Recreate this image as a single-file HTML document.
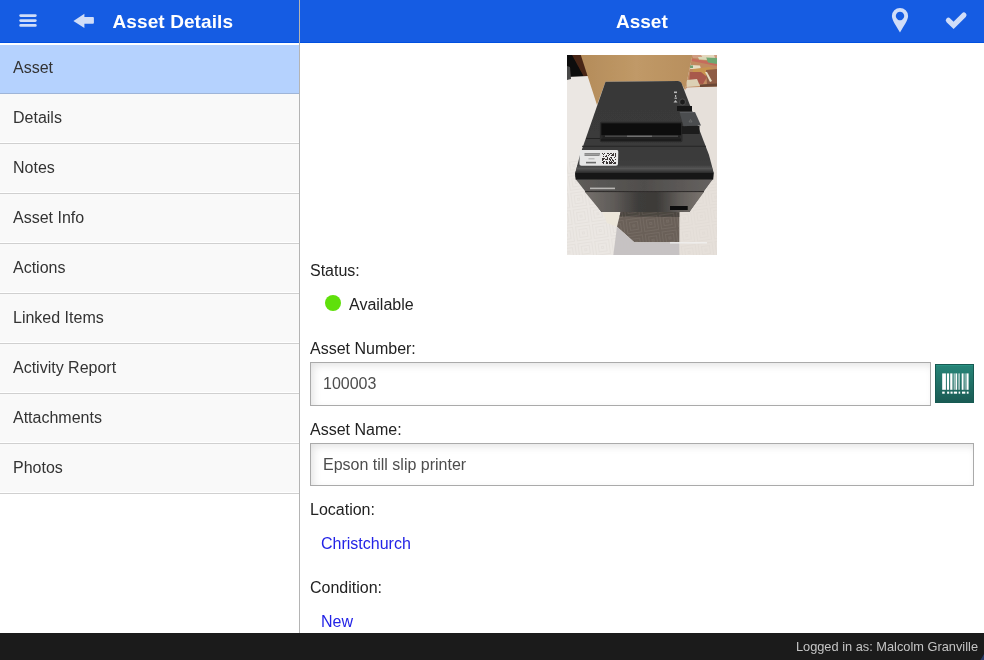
<!DOCTYPE html>
<html><head><meta charset="utf-8">
<style>
*{margin:0;padding:0;box-sizing:border-box}
html,body{width:984px;height:660px;overflow:hidden;background:#fff;font-family:"Liberation Sans",sans-serif;color:#333}
.abs{position:absolute}
#hdr{position:absolute;left:0;top:0;width:984px;height:43px;background:#155ce3;border-bottom:1px solid #0050e0}
.ttl{position:absolute;color:#fff;font-weight:bold;font-size:19px;line-height:22px;white-space:nowrap}
#vsep{position:absolute;left:299px;top:0;width:1px;height:633px;background:#b4b4b4}
#side{position:absolute;left:0;top:43px;width:299px;height:590px;background:#fff}
.it{position:absolute;left:0;width:299px;height:50px;background:#f9f9f9;border-bottom:1px solid #d0d0d0;box-shadow:inset 0 -1px 0 #fff;font-size:16px;line-height:18px;color:#333}
.it span{position:absolute;left:13px;top:15px}
.lbl{position:absolute;left:310px;font-size:16px;line-height:18px;color:#222;white-space:nowrap}
.inp{position:absolute;left:310px;border:1px solid #aaa;background:#fff;box-shadow:inset 3px 3px 8px -1px rgba(0,0,0,0.12)}
.inp span{position:absolute;left:12px;font-size:16px;line-height:18px;color:#4d4d4d;white-space:nowrap}
.lnk{position:absolute;left:321px;font-size:16px;line-height:18px;color:#2323e6;white-space:nowrap}
#ftr{position:absolute;left:0;top:633px;width:984px;height:27px;background:#1b1b1b}
#ftr span{position:absolute;right:6px;top:6px;font-size:12.8px;line-height:15px;color:#c4c4c4;white-space:nowrap}
</style></head><body>
<div id="wrap" style="position:absolute;left:0;top:0;width:984px;height:660px;will-change:transform">
<div id="hdr"></div>
<div id="side">
  <div style="position:absolute;left:0;top:0;width:299px;height:2px;background:#fff"></div>
  <div class="it" style="top:2px;height:49px;background:#b5d2fe;border-bottom-color:#9fb5d8;box-shadow:none"><span style="top:14px">Asset</span></div>
  <div class="it" style="top:51px"><span>Details</span></div>
  <div class="it" style="top:101px"><span>Notes</span></div>
  <div class="it" style="top:151px"><span>Asset Info</span></div>
  <div class="it" style="top:201px"><span>Actions</span></div>
  <div class="it" style="top:251px"><span>Linked Items</span></div>
  <div class="it" style="top:301px"><span>Activity Report</span></div>
  <div class="it" style="top:351px"><span>Attachments</span></div>
  <div class="it" style="top:401px"><span>Photos</span></div>
</div>
<div id="vsep"></div>
<!-- header contents -->
<svg class="abs" style="left:0;top:0" width="300" height="42">
  <g fill="#d0ddf8">
    <rect x="19.3" y="14.2" width="17.4" height="2.7" rx="1.3"/>
    <rect x="19.3" y="19.2" width="17.4" height="2.7" rx="1.3"/>
    <rect x="19.3" y="24.1" width="17.4" height="2.7" rx="1.3"/>
    <path d="M73.4 21 L84.4 13.8 L84.4 17.1 L93 17.1 Q93.9 17.1 93.9 18 L93.9 22.8 Q93.9 23.7 93 23.7 L84.4 23.7 L84.4 28.1 Z"/>
  </g>
</svg>
<div class="ttl" style="left:112.5px;top:11px;letter-spacing:0.1px">Asset Details</div>
<div class="ttl" style="left:616px;top:11px">Asset</div>
<svg class="abs" style="left:860px;top:0" width="124" height="42">
  <g fill="#d0ddf8">
    <path fill-rule="evenodd" d="M40 8 A8.1 8.1 0 0 1 48.1 16.1 C48.1 20 44 26 40 32.4 C36 26 31.9 20 31.9 16.1 A8.1 8.1 0 0 1 40 8 Z M40 11.8 A4.2 4.2 0 1 0 40.01 11.8 Z"/>
    <path d="M88.4 20.3 L93.6 25.4 L103.9 15.1" fill="none" stroke="#d0ddf8" stroke-width="5.2" stroke-linecap="round"/>
  </g>
</svg>
<!-- photo -->
<svg class="abs" style="left:567px;top:55px" width="150" height="200" viewBox="0 0 150 200">
  <defs>
    <filter id="soft" x="0" y="0" width="1" height="1"><feGaussianBlur stdDeviation="0.45"/></filter>
    <pattern id="tpat" patternUnits="userSpaceOnUse" width="17" height="17" patternTransform="rotate(-8)">
      <g fill="none" stroke="#c8c2bc" stroke-width="0.9">
        <rect x="1.5" y="1.5" width="14" height="14"/><rect x="4.5" y="4.5" width="8" height="8"/><rect x="7.5" y="7.5" width="2" height="2"/>
      </g>
    </pattern>
    <linearGradient id="edge" x1="0" y1="0" x2="0" y2="1"><stop offset="0" stop-color="#3e3e3e"/><stop offset="0.45" stop-color="#555"/><stop offset="1" stop-color="#2a2a2a"/></linearGradient>
    <clipPath id="pc"><rect x="0" y="105" width="150" height="95"/></clipPath>
    <linearGradient id="box" x1="0" y1="0" x2="1" y2="0"><stop offset="0" stop-color="#b48c5a"/><stop offset="0.5" stop-color="#c09967"/><stop offset="1" stop-color="#b88f5e"/></linearGradient>
    <linearGradient id="front" x1="0" y1="0" x2="1" y2="0"><stop offset="0" stop-color="#74706c"/><stop offset="0.25" stop-color="#5e5a57"/><stop offset="0.45" stop-color="#3e3c3a"/><stop offset="0.6" stop-color="#3c3a38"/><stop offset="0.8" stop-color="#625e5a"/><stop offset="1" stop-color="#7a746f"/></linearGradient>
    <linearGradient id="front2" x1="0" y1="0" x2="1" y2="0"><stop offset="0" stop-color="#5e5c5a"/><stop offset="0.5" stop-color="#504e4c"/><stop offset="1" stop-color="#666260"/></linearGradient>
    <linearGradient id="topg" x1="0" y1="0" x2="0" y2="1"><stop offset="0" stop-color="#383838"/><stop offset="0.6" stop-color="#3b3b3b"/><stop offset="0.85" stop-color="#484848"/><stop offset="0.93" stop-color="#5e5e5e"/><stop offset="1" stop-color="#2a2a2a"/></linearGradient>
  </defs>
  <rect width="150" height="200" fill="#e3dfdb"/>
  <g filter="url(#soft)">
  <!-- left table -->
  <polygon points="0,22 19,21 38,27 8,119 8.4,122 34.5,157 53.6,157.3 50,171.8 46.4,200 0,200" fill="#ebe7e3"/>
  <polygon points="0,22 19,21 38,27 8,119 8.4,122 34.5,157 53.6,157.3 50,171.8 46.4,200 0,200" fill="url(#tpat)" opacity="0.2" clip-path="url(#pc)"/>
  <polygon points="35.5,157.3 53.6,157.3 50,171.8 40,168" fill="#ece6da"/>
  <!-- right table -->
  <polygon points="118,35 120,33 150,30 150,200 112,200 112,157 122.3,157 146,123 146.6,117.5 142,100" fill="#e6e0da"/>
  <polygon points="118,35 120,33 150,30 150,200 112,200 112,157 122.3,157 146,123 146.6,117.5 142,100" fill="url(#tpat)" opacity="0.15" clip-path="url(#pc)"/>
  <!-- top-left dark -->
  <polygon points="0,0 14.6,0 21,21 0,22" fill="#0e0c0c"/>
  <polygon points="5,0 14.6,0 21,21 16.5,21" fill="#4a2816"/>
  <polygon points="0,11 3,12 4,24 0,25" fill="#4a4a48"/>
  <!-- box -->
  <polygon points="13.8,0 125.5,0 118,35 113,26 38.5,26.8 30,50" fill="url(#box)"/>
  <!-- cloth -->
  <polygon points="125.5,0 150,0 150,31.5 133,32 120,32.5 118,35" fill="#c08a60"/>
  <polygon points="125.5,0 150,0 150,4 126,3" fill="#cf9c80"/>
  <polygon points="134,0 147,0 148,3 136,3" fill="#e4d6bc"/>
  <polygon points="125,3.5 150,8 150,11 124.5,6" fill="#c66c5c"/>
  <polygon points="139,2.5 150,3 150,9 141,7.5" fill="#6ea872"/>
  <polygon points="131,2 139,2 140,5 132,4.5" fill="#d8d8b8"/>
  <polygon points="124,10 133,10.5 134,14 123,14" fill="#e4dcc4"/>
  <polygon points="123,10.5 126,10.5 126,13 123,13" fill="#70a070"/>
  <polygon points="126,14 142,12 150,15 150,20 140,24 125,24" fill="#c89450"/>
  <polygon points="123,17 134,17 140,22 136,29 122,28" fill="#a8584c"/>
  <polygon points="139,15 150,14 150,31 140,30" fill="#8e5c44"/>
  <polygon points="138,17 140,17 145,26 143,27" fill="#e6dcc2"/>
  <polygon points="120,25 130,24 133,31 119.5,32" fill="#dcd0b4"/>
  <polygon points="133,29.5 150,28.5 150,31.5 133,32" fill="#6a4634"/>
  <!-- printer body -->
  <path d="M38.5,26.8 L111,26 Q113.5,26 114.5,28 L142,100 L146.6,117.5 L146,123 L122.3,157 L34.5,157 L8.4,122 L8,119 L13,100 Z" fill="url(#topg)"/>
  <!-- front faces -->
  <polygon points="8.6,124 146,124 137,136 18,136" fill="url(#front2)"/>
  <polygon points="18,137 137,137 122.3,157 34.5,157" fill="url(#front)"/>
  <line x1="18" y1="136.6" x2="137" y2="136.6" stroke="#2e2c2a" stroke-width="1"/>
  <!-- dark rounded edge band -->
  <polygon points="10.5,110 144,110 146.6,118 8.2,118" fill="url(#edge)"/>
  <polygon points="8.2,118 146.6,118 146.2,124.5 8.6,124.5" fill="#171717"/>
  <!-- seams on top -->
  <line x1="19" y1="83.5" x2="34" y2="83.5" stroke="#232323" stroke-width="1"/>
  <line x1="15" y1="91.3" x2="139" y2="91.3" stroke="#262626" stroke-width="1"/>
  <!-- paper slot -->
  <rect x="32.8" y="66.8" width="82.8" height="20.4" rx="2" fill="#2c2c2c"/>
  <rect x="34.3" y="68.3" width="79.8" height="12" fill="#111"/>
  <rect x="35.5" y="80" width="77.5" height="3.4" fill="#232323"/>
  <line x1="38" y1="81.2" x2="111" y2="81.2" stroke="#5a5a5a" stroke-width="0.9"/>
  <line x1="60" y1="81.2" x2="85" y2="81.2" stroke="#8a8a8a" stroke-width="0.9"/>
  <rect x="34.3" y="83.6" width="79.8" height="2.4" fill="#1a1a1a"/>
  <!-- cutter button -->
  <rect x="110" y="51" width="15" height="5" fill="#141414"/>
  <rect x="114.5" y="71" width="18" height="8" fill="#1c1c1c"/>
  <polygon points="112.5,57 128,57 134,70.5 116.5,71.3" fill="#4b4d4f"/>
  <line x1="113" y1="57.5" x2="128" y2="57.5" stroke="#5e6062" stroke-width="0.8"/>
  <polygon points="122,67 123.5,64.5 125,67" fill="none" stroke="#777" stroke-width="0.6"/>
  <!-- panel icons -->
  <rect x="107" y="36.5" width="3" height="1.6" fill="#bbb"/>
  <rect x="108" y="40" width="1.2" height="2" fill="#bbb"/>
  <rect x="107.5" y="42.5" width="2.5" height="1.4" fill="#aaa"/>
  <polygon points="106.5,47.5 108.5,45 110.5,47.5" fill="#bbb"/>
  <circle cx="115.5" cy="47" r="3" fill="#1e1e1e" stroke="#5a5a5a" stroke-width="0.7"/>
  <!-- sticker -->
  <path d="M14,95 L50,95 Q51.5,95 51.3,97 L51,109 Q51,110.7 49,110.7 L14.5,110.7 Q12.3,110.7 12.4,109 L12.8,97 Q13,95 14,95 Z" fill="#e6e6e6"/>
  <rect x="17.5" y="98.3" width="15.5" height="1.2" fill="#666"/>
  <rect x="17.5" y="99.8" width="15" height="1.2" fill="#888"/>
  <rect x="21.5" y="103.3" width="6" height="1" fill="#aaa"/>
  <rect x="19" y="106.8" width="10" height="1.6" fill="#6a6a6a"/>
  <rect x="34.5" y="97.5" width="15" height="11.5" fill="#ececec"/>
  <path d="M35,98h1v1h-1zM37,98h1v1h-1zM40,98h1v1h-1zM41,98h1v1h-1zM43,98h1v1h-1zM44,98h1v1h-1zM46,98h1v1h-1zM48,98h1v1h-1zM36,99h1v1h-1zM42,99h1v1h-1zM45,99h1v1h-1zM46,99h1v1h-1zM48,99h1v1h-1zM39,100h1v1h-1zM41,100h1v1h-1zM44,100h1v1h-1zM45,100h1v1h-1zM46,100h1v1h-1zM48,100h1v1h-1zM36,101h1v1h-1zM38,101h1v1h-1zM39,101h1v1h-1zM48,101h1v1h-1zM40,102h1v1h-1zM43,102h1v1h-1zM44,102h1v1h-1zM47,102h1v1h-1zM35,103h1v1h-1zM36,103h1v1h-1zM37,103h1v1h-1zM40,103h1v1h-1zM42,103h1v1h-1zM44,103h1v1h-1zM35,104h1v1h-1zM36,104h1v1h-1zM38,104h1v1h-1zM39,104h1v1h-1zM40,104h1v1h-1zM42,104h1v1h-1zM43,104h1v1h-1zM45,104h1v1h-1zM48,104h1v1h-1zM35,105h1v1h-1zM43,105h1v1h-1zM45,105h1v1h-1zM46,105h1v1h-1zM36,106h1v1h-1zM37,106h1v1h-1zM39,106h1v1h-1zM42,106h1v1h-1zM44,106h1v1h-1zM46,106h1v1h-1zM35,107h1v1h-1zM36,107h1v1h-1zM39,107h1v1h-1zM40,107h1v1h-1zM42,107h1v1h-1zM43,107h1v1h-1zM44,107h1v1h-1zM45,107h1v1h-1zM47,107h1v1h-1zM48,107h1v1h-1zM36,108h1v1h-1zM39,108h1v1h-1zM40,108h1v1h-1zM42,108h1v1h-1zM43,108h1v1h-1zM44,108h1v1h-1zM46,108h1v1h-1zM47,108h1v1h-1zM48,108h1v1h-1z" fill="#3a3434"/>
  <!-- EPSON -->
  <rect x="23" y="132.6" width="25" height="1.6" fill="#b8b6b4"/>
  <rect x="103" y="151" width="17.7" height="4" fill="#0a0a0a"/>
  <!-- shadow -->
  <polygon points="53.6,157 112.3,157 112.3,187.3 67.3,187.3 50,171.8" fill="#6a6058"/>
  <polygon points="53.6,157 112.3,157 112.3,162 52.5,161.5" fill="#4c4640"/>
  <polygon points="53.6,157 112.3,157 112.3,187.3 67.3,187.3 50,171.8" fill="url(#tpat)" opacity="0.12"/>
  <polygon points="50,171.8 67.3,187.3 112.3,187.3 112.3,200 46.4,200" fill="#c6c2c3"/>
  <polygon points="50,171.8 67.3,187.3 112.3,187.3 112.3,200 46.4,200" fill="url(#tpat)" opacity="0.15" clip-path="url(#pc)"/>
  <rect x="103" y="187" width="37" height="1.6" fill="#f4f4f4" opacity="0.7"/>
  </g>
</svg>
<!-- content -->
<div class="lbl" style="top:262px">Status:</div>
<div class="abs" style="left:325px;top:295px;width:16px;height:16px;border-radius:50%;background:#5fe00a"></div>
<div class="lbl" style="left:349px;top:296px;color:#222">Available</div>
<div class="lbl" style="top:340px">Asset Number:</div>
<div class="inp" style="top:362px;width:621px;height:44px"><span style="top:12px">100003</span></div>
<svg class="abs" style="left:935px;top:364px" width="39" height="39" viewBox="0 0 39 39">
  <defs><linearGradient id="bc" x1="0" y1="0" x2="0" y2="1"><stop offset="0" stop-color="#278679"/><stop offset="1" stop-color="#1a5a53"/></linearGradient>
  <linearGradient id="fd" x1="0" y1="0" x2="1" y2="0"><stop offset="0" stop-color="#fff" stop-opacity="0.25"/><stop offset="1" stop-color="#fff" stop-opacity="0.8"/></linearGradient></defs>
  <rect x="0" y="0" width="39" height="39" fill="url(#bc)"/>
  <rect x="0.5" y="0.5" width="38" height="38" fill="none" stroke="#175a52" stroke-width="1"/>
  <rect x="1" y="1" width="37" height="1" fill="#2a9283"/>
  <g fill="#fff">
    <rect x="7.2" y="9.4" width="3.7" height="16.4"/>
    <rect x="11.9" y="9.4" width="2.2" height="16.4"/>
    <rect x="15.2" y="9.4" width="2.1" height="16.4"/>
    <rect x="17.3" y="9.4" width="1.2" height="16.4" opacity="0.35"/>
    <rect x="18.8" y="9.4" width="1.5" height="16.4" opacity="0.55"/>
    <rect x="20.6" y="9.4" width="1.5" height="16.4"/>
    <rect x="22.7" y="9.4" width="2.1" height="16.4" fill="url(#fd)"/>
    <rect x="26.7" y="9.4" width="1.8" height="16.4"/>
    <rect x="28.5" y="9.4" width="3.3" height="16.4" fill="url(#fd)" opacity="0.7"/>
    <rect x="31.8" y="9.4" width="1.8" height="16.4"/>
    <rect x="7.2" y="27.6" width="2.5" height="2.1"/>
    <rect x="12.1" y="27.6" width="2.1" height="2.1"/>
    <rect x="15.5" y="27.6" width="2.1" height="2.1"/>
    <rect x="18.8" y="27.6" width="3.3" height="2.1"/>
    <rect x="23.6" y="27.6" width="1.6" height="2.1"/>
    <rect x="27" y="27.6" width="3.3" height="2.1"/>
    <rect x="31.8" y="27.6" width="1.8" height="2.1"/>
  </g>
</svg>
<div class="lbl" style="top:421px">Asset Name:</div>
<div class="inp" style="top:443px;width:664px;height:43px"><span style="top:12px">Epson till slip printer</span></div>
<div class="lbl" style="top:501px">Location:</div>
<div class="lnk" style="top:535px">Christchurch</div>
<div class="lbl" style="top:579px">Condition:</div>
<div class="lnk" style="top:613px">New</div>
<div id="ftr"><span>Logged in as: Malcolm Granville</span></div>
<svg class="abs" style="left:978px;top:652px" width="6" height="8"><polygon points="2.5,8 6,2 6,8" fill="#2b3b68"/></svg>
</div>
</body></html>
